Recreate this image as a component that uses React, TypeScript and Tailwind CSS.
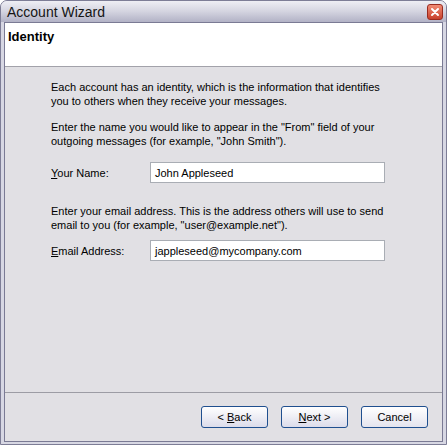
export default function App() {
  return (
    <div className="w-[447px] h-[445px] flex flex-col bg-[#d7d7e3] border border-[#7d7d96] rounded-t-[7px] overflow-hidden font-['Liberation_Sans',Arial,sans-serif] text-black">
      {/* Title bar */}
      <div className="h-[21px] shrink-0 flex items-center justify-between pl-[6px] pr-[3px] bg-gradient-to-b from-[#eeeef4] via-[#d4d4e0] to-[#b2b2c6]">
        <span className="text-[14px] leading-none text-[#141414]">Account Wizard</span>
        <div className="w-[16px] h-[16px] rounded-[3px] border border-[#9a2a1e] bg-gradient-to-b from-[#f08a74] to-[#c8402c] flex items-center justify-center">
          <svg width="10" height="10" viewBox="0 0 10 10">
            <path d="M2 2 L8 8 M8 2 L2 8" stroke="#fff" strokeWidth="2" strokeLinecap="round" />
          </svg>
        </div>
      </div>

      {/* Body */}
      <div className="flex-1 flex flex-col mx-[3px] mb-[2px] border border-[#7a7a94] bg-[#e1e0e4]">
        {/* Header */}
        <div className="h-[44px] shrink-0 bg-white border-b border-[#a2a2aa] px-[3px] pt-[6px]">
          <p className="text-[13px] leading-[16px] font-bold">Identity</p>
        </div>

        {/* Content */}
        <div className="flex-1 pl-[46px] pr-[10px] pt-[13px] text-[11px] leading-[14px]">
          <p>
            Each account has an identity, which is the information that identifies
            <br />
            you to others when they receive your messages.
          </p>
          <p className="mt-[12px]">
            Enter the name you would like to appear in the "From" field of your
            <br />
            outgoing messages (for example, "John Smith").
          </p>
          <div className="mt-[14px] flex items-center">
            <span className="w-[99px]">
              <span className="underline">Y</span>our Name:
            </span>
            <div className="w-[235px] h-[21px] bg-white border border-[#a9adb4] flex items-center px-[4px]">
              John Appleseed
            </div>
          </div>
          <p className="mt-[21px]">
            Enter your email address. This is the address others will use to send
            <br />
            email to you (for example, "user@example.net").
          </p>
          <div className="mt-[8px] flex items-center">
            <span className="w-[99px]">
              <span className="underline">E</span>mail Address:
            </span>
            <div className="w-[235px] h-[21px] bg-white border border-[#a9adb4] flex items-center px-[4px]">
              jappleseed@mycompany.com
            </div>
          </div>
        </div>

        {/* Footer */}
        <div className="h-[49px] shrink-0 border-t border-[#9c9ca4] flex items-start justify-end gap-[13px] pt-[13px] pr-[14px] text-[11px]">
          <button className="w-[67px] h-[22px] rounded-[3px] border border-[#1f4f8f] bg-gradient-to-b from-white to-[#dcdcea]">
            &lt; <span className="underline">B</span>ack
          </button>
          <button className="w-[67px] h-[22px] rounded-[3px] border border-[#1f4f8f] bg-gradient-to-b from-white to-[#dcdcea]">
            <span className="underline">N</span>ext &gt;
          </button>
          <button className="w-[67px] h-[22px] rounded-[3px] border border-[#1f4f8f] bg-gradient-to-b from-white to-[#e4e4ee]">
            Cancel
          </button>
        </div>
      </div>
    </div>
  );
}
